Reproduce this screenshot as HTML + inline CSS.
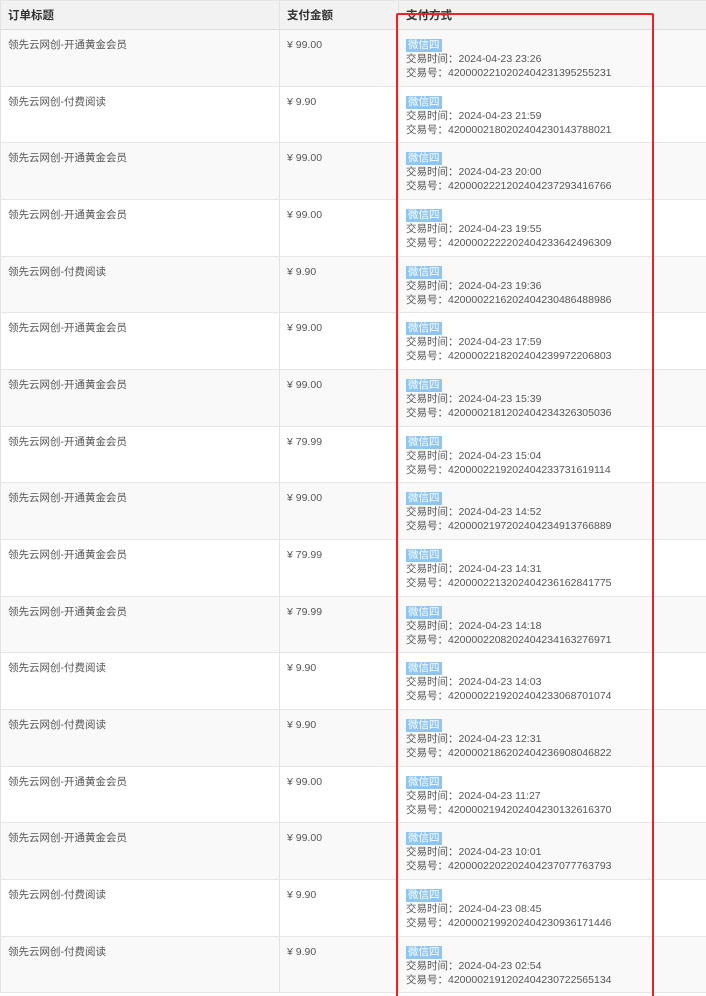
<!DOCTYPE html>
<html><head><meta charset="utf-8"><style>
*{margin:0;padding:0;box-sizing:border-box}
html,body{width:706px;height:996px;overflow:hidden}
body{background:#fff;font-family:"Liberation Sans","Noto Sans CJK SC",sans-serif;font-size:10.5px;color:#555;position:relative}
.hd{position:absolute;left:0;top:0;width:706px;height:30px;background:#f2f2f2;border-top:1px solid #e4e4e4;border-bottom:1px solid #ddd;font-weight:bold;color:#333;font-size:11.5px}
.row{position:absolute;left:0;width:706px;height:56.67px;border-bottom:1px solid #e6e6e6}
.c{position:absolute;top:0;height:100%;border-left:1px solid #e2e2e2;padding:8px 0 0 7px;line-height:14px}
.c1{left:0;width:279px}
.c2{left:279px;width:119px}
.c3{left:398px;width:308px}
.hd .c{padding-top:8px}
.b{display:inline-block;background:#8ec5f3;color:#fff;font-size:10.5px;line-height:13px;padding:0 2px;margin-bottom:0}
.red{position:absolute;left:396px;top:13px;width:258px;height:1020px;border:2px solid #ee2222;border-radius:2px}
</style></head><body>
<div class="hd"><div class="c c1">订单标题</div><div class="c c2">支付金额</div><div class="c c3">支付方式</div></div>
<div id="rows"></div>
<script>
var d=[["开通黄金会员","99.00","23:26","4200002210202404231395255231"],
["付费阅读","9.90","21:59","4200002180202404230143788021"],
["开通黄金会员","99.00","20:00","4200002221202404237293416766"],
["开通黄金会员","99.00","19:55","4200002222202404233642496309"],
["付费阅读","9.90","19:36","4200002216202404230486488986"],
["开通黄金会员","99.00","17:59","4200002218202404239972206803"],
["开通黄金会员","99.00","15:39","4200002181202404234326305036"],
["开通黄金会员","79.99","15:04","4200002219202404233731619114"],
["开通黄金会员","99.00","14:52","4200002197202404234913766889"],
["开通黄金会员","79.99","14:31","4200002213202404236162841775"],
["开通黄金会员","79.99","14:18","4200002208202404234163276971"],
["付费阅读","9.90","14:03","4200002219202404233068701074"],
["付费阅读","9.90","12:31","4200002186202404236908046822"],
["开通黄金会员","99.00","11:27","4200002194202404230132616370"],
["开通黄金会员","99.00","10:01","4200002202202404237077763793"],
["付费阅读","9.90","08:45","4200002199202404230936171446"],
["付费阅读","9.90","02:54","4200002191202404230722565134"]];
var h="";
d.forEach(function(r,i){
h+='<div class="row" style="top:'+(30+i*56.67)+'px;background:'+(i%2==0?'#f9f9f9':'#fff')+'"><div class="c c1">领先云网创-'+r[0]+'</div><div class="c c2">¥ '+r[1]+'</div><div class="c c3"><span class="b">微信四</span><br>交易时间：2024-04-23 '+r[2]+'<br>交易号：'+r[3]+'</div></div>';
});
document.getElementById("rows").innerHTML=h;
</script>
<div class="red"></div>
</body></html>
